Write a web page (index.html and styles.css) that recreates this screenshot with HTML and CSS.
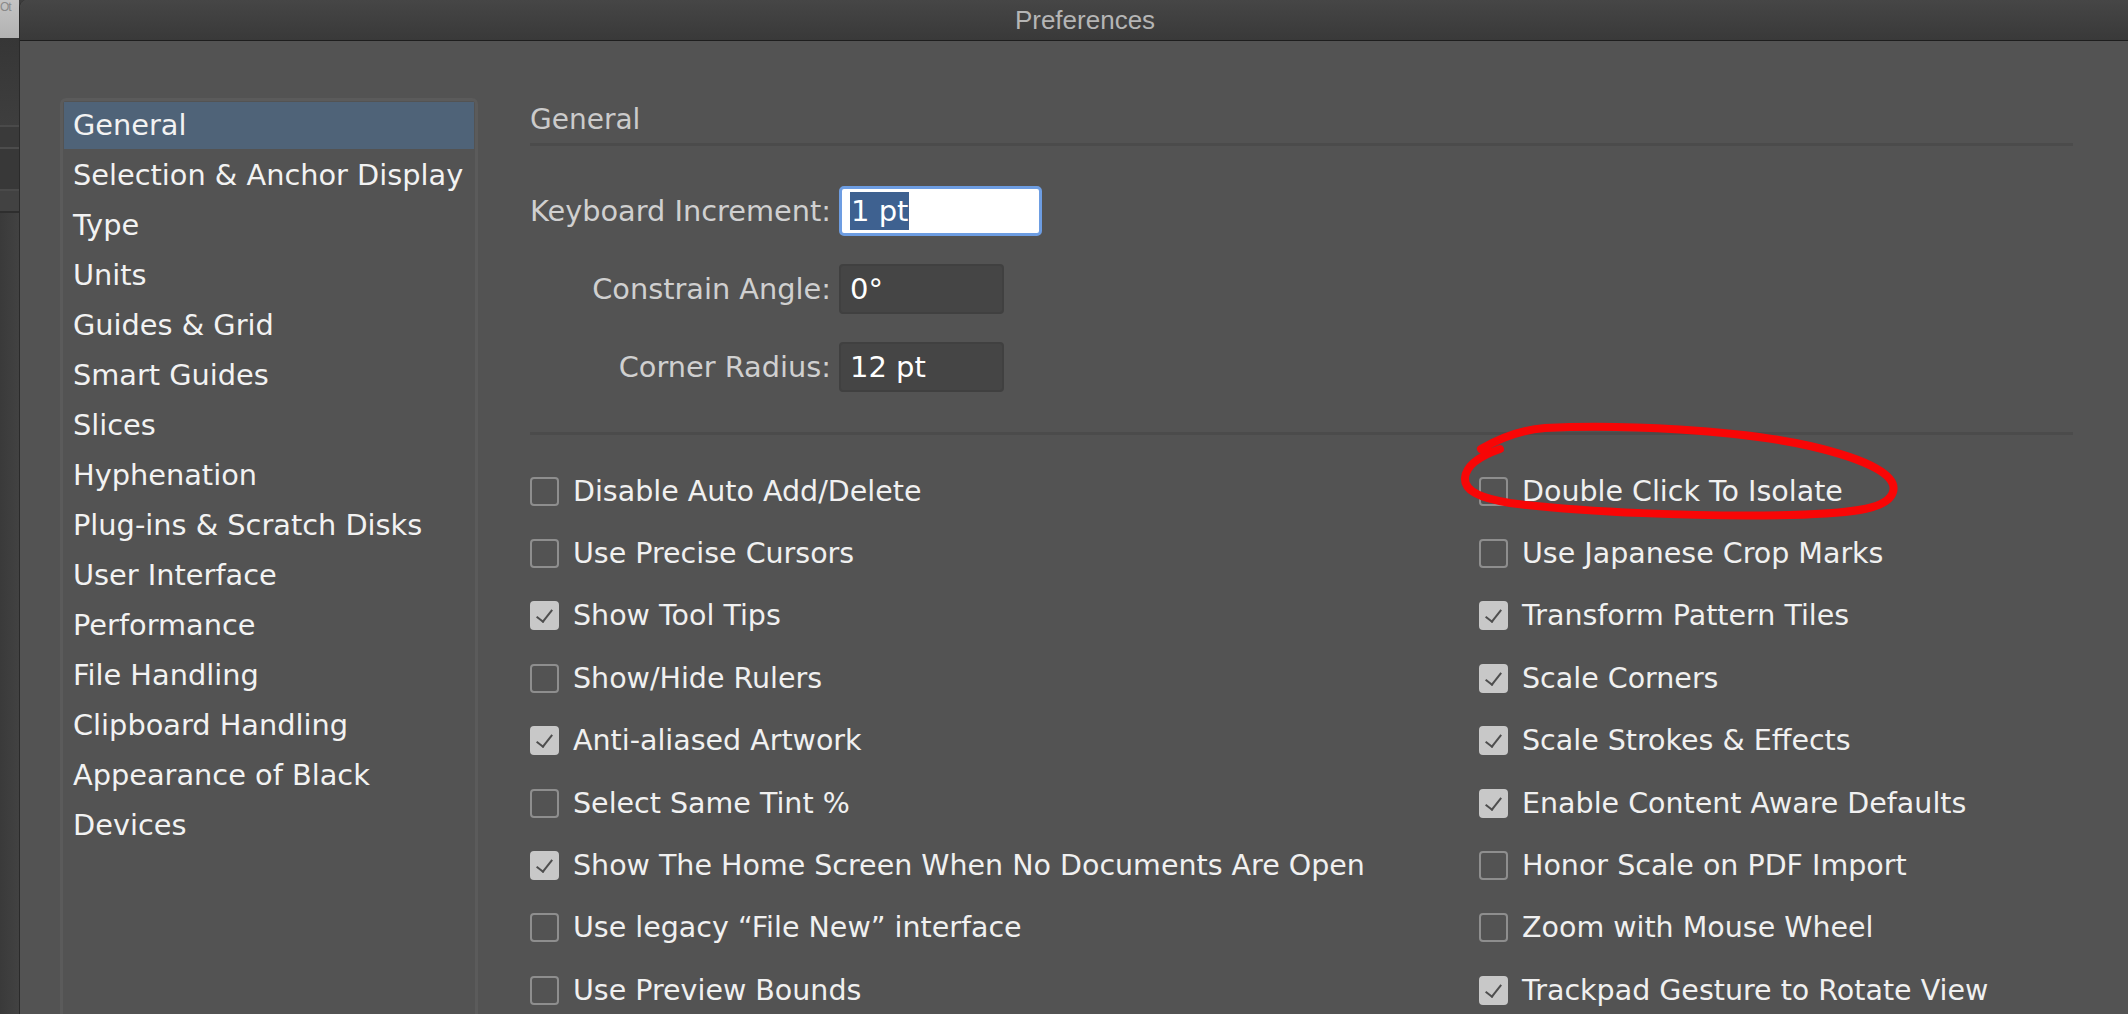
FILE: index.html
```html
<!DOCTYPE html>
<html lang="en">
<head>
  <meta charset="UTF-8">
  <title>Preferences</title>
  <link rel="stylesheet" href="styles.css">
</head>
<body>
  <div class="behind">
    <div class="behind-top"><span>Ot</span></div>
    <div class="band band-a"></div>
    <div class="band band-b"></div>
    <div class="band band-c"></div>
    <div class="band band-d"></div>
    <div class="band band-e"></div>
  </div>

  <div class="dialog">
    <div class="titlebar">Preferences</div>

    <div class="content">
      <ul class="sidebar">
        <li class="selected">General</li>
        <li>Selection &amp; Anchor Display</li>
        <li>Type</li>
        <li>Units</li>
        <li>Guides &amp; Grid</li>
        <li>Smart Guides</li>
        <li>Slices</li>
        <li>Hyphenation</li>
        <li>Plug-ins &amp; Scratch Disks</li>
        <li>User Interface</li>
        <li>Performance</li>
        <li>File Handling</li>
        <li>Clipboard Handling</li>
        <li>Appearance of Black</li>
        <li>Devices</li>
      </ul>

      <div class="main">
        <h2 class="section-title">General</h2>

        <div class="fields">
          <label class="field-label">Keyboard Increment:</label>
          <div class="input input-focus"><span class="sel">1 pt</span></div>
          <label class="field-label">Constrain Angle:</label>
          <div class="input">0°</div>
          <label class="field-label">Corner Radius:</label>
          <div class="input">12 pt</div>
        </div>

        <div class="options">
          <div class="opt"><span class="box"></span>Disable Auto Add/Delete</div>
          <div class="opt"><span class="box"></span>Double Click To Isolate</div>
          <div class="opt"><span class="box"></span>Use Precise Cursors</div>
          <div class="opt"><span class="box"></span>Use Japanese Crop Marks</div>
          <div class="opt"><span class="box on"></span>Show Tool Tips</div>
          <div class="opt"><span class="box on"></span>Transform Pattern Tiles</div>
          <div class="opt"><span class="box"></span>Show/Hide Rulers</div>
          <div class="opt"><span class="box on"></span>Scale Corners</div>
          <div class="opt"><span class="box on"></span>Anti-aliased Artwork</div>
          <div class="opt"><span class="box on"></span>Scale Strokes &amp; Effects</div>
          <div class="opt"><span class="box"></span>Select Same Tint %</div>
          <div class="opt"><span class="box on"></span>Enable Content Aware Defaults</div>
          <div class="opt"><span class="box on"></span>Show The Home Screen When No Documents Are Open</div>
          <div class="opt"><span class="box"></span>Honor Scale on PDF Import</div>
          <div class="opt"><span class="box"></span>Use legacy “File New” interface</div>
          <div class="opt"><span class="box"></span>Zoom with Mouse Wheel</div>
          <div class="opt"><span class="box"></span>Use Preview Bounds</div>
          <div class="opt"><span class="box on"></span>Trackpad Gesture to Rotate View</div>
        </div>
      </div>
    </div>
  </div>

  <!-- red marker scribble around "Double Click To Isolate" -->
  <svg class="scribble" width="2128" height="1014" viewBox="0 0 2128 1014">
    <path d="M1481 449 C1500 438 1520 430 1545 428 C1620 424 1740 430 1810 446 C1870 460 1898 476 1893 492 C1888 508 1860 513 1790 515 C1700 517 1580 512 1510 503 C1478 498 1464 490 1465 478 C1466 465 1480 456 1500 449"
          fill="none" stroke="#f80606" stroke-width="8" stroke-linecap="round" stroke-linejoin="round"/>
  </svg>
</body>
</html>
```

FILE: styles.css
```css
body {
  margin: 0;
  height: 1014px;
  overflow: hidden;
  background: #3c3c3c;
  display: flex;
  position: relative;
  font-family: 'DejaVu Sans', 'Noto Sans', sans-serif;
}

/* 後ろのウィンドウの端 */
.behind {
  width: 19px;
  flex: none;
  display: flex;
  flex-direction: column;
  background: #3c3c3c;
}

.behind-top {
  height: 38px;
  background: linear-gradient(#c4c4c4, #b2b2b2);
  overflow: hidden;
}

.behind-top span {
  display: block;
  font-family: 'Liberation Sans', sans-serif;
  font-size: 12px;
  line-height: 14px;
  letter-spacing: -1px;
  color: #8a8a8a;
}

.band { flex: none; }
.band-a { height: 87px; background: linear-gradient(#363636, #3e3e3e); border-bottom: 2px solid #4a4a4a; }
.band-b { height: 20px; background: #3a3a3a; border-bottom: 2px solid #4c4c4c; }
.band-c { height: 40px; background: #383838; border-bottom: 2px solid #4a4a4a; }
.band-d { height: 20px; background: #424242; border-bottom: 2px solid #2e2e2e; }
.band-e { flex: 1; background: linear-gradient(90deg, #3a3a3a, #424242); }

.dialog {
  flex: 1;
  background: #535353;
  border-left: 1px solid #2a2a2a;
  border-top-left-radius: 8px;
  overflow: hidden;
  display: flex;
  flex-direction: column;
}

.titlebar {
  height: 40px;
  flex: none;
  border-bottom: 1px solid #1e1e1e;
  background: linear-gradient(#464646, #393939);
  color: #b5b5b5;
  font-family: 'Liberation Sans', sans-serif;
  font-size: 26px;
  line-height: 40px;
  text-align: center;
  padding-left: 22px;
}

.content {
  flex: 1;
  display: flex;
  padding: 57px 0 0 40px;
}

/* 左のカテゴリ一覧 */
.sidebar {
  list-style: none;
  margin: 0 0 -20px 0;
  padding: 1px;
  width: 410px;
  border: 3px solid #5b5b5b;
  border-radius: 6px;
}

.sidebar li {
  height: 47px;
  line-height: 47px;
  margin-bottom: 3px;
  padding-left: 9px;
  font-size: 28.8px;
  color: #f2f2f2;
  white-space: nowrap;
}

.sidebar li.selected {
  background: #4f6378;
}

.main {
  flex: 1;
  margin: 0 55px 0 52px;
}

.section-title {
  margin: 0;
  font-weight: normal;
  font-size: 28px;
  line-height: 44px;
  color: #cbcbcb;
  padding-bottom: 1px;
  border-bottom: 3px solid #4b4b4b;
}

.fields {
  display: grid;
  grid-template-columns: 301px auto;
  column-gap: 8px;
  row-gap: 28px;
  margin-top: 40px;
  justify-items: start;
  align-items: center;
}

.field-label {
  justify-self: end;
  font-size: 28.8px;
  color: #d0d0d0;
  white-space: nowrap;
}

.input {
  box-sizing: border-box;
  width: 165px;
  height: 50px;
  padding-left: 9px;
  background: #454545;
  border: 2px solid #404040;
  border-radius: 4px;
  color: #ffffff;
  font-size: 29px;
  line-height: 46px;
}

.input-focus {
  width: 203px;
  background: #ffffff;
  border: 3px solid #6d9de2;
  border-radius: 5px;
  padding-left: 8px;
  line-height: 44px;
}

.sel {
  background: #3e6190;
  color: #ffffff;
  padding: 2px 1px;
}

.options {
  margin-top: 40px;
  padding-top: 25px;
  border-top: 3px solid #4b4b4b;
  display: grid;
  grid-template-columns: 949px auto;
  grid-auto-rows: 62.4px;
}

.opt {
  display: flex;
  align-items: center;
  gap: 14px;
  font-size: 28.5px;
  color: #f0f0f0;
  white-space: nowrap;
}

.box {
  box-sizing: border-box;
  width: 29px;
  height: 29px;
  flex: none;
  border: 2px solid #8e8e8e;
  border-radius: 4px;
  position: relative;
}

.box.on {
  background: #c8c8c8;
  border-color: #c8c8c8;
}

/* チェックマーク */
.box.on::after {
  content: '';
  position: absolute;
  left: 8px;
  top: 3px;
  width: 7px;
  height: 14px;
  border-right: 2.5px solid #4e4e4e;
  border-bottom: 2.5px solid #4e4e4e;
  transform: rotate(38deg);
}

.scribble {
  position: absolute;
  left: 0;
  top: 0;
  pointer-events: none;
}
```
